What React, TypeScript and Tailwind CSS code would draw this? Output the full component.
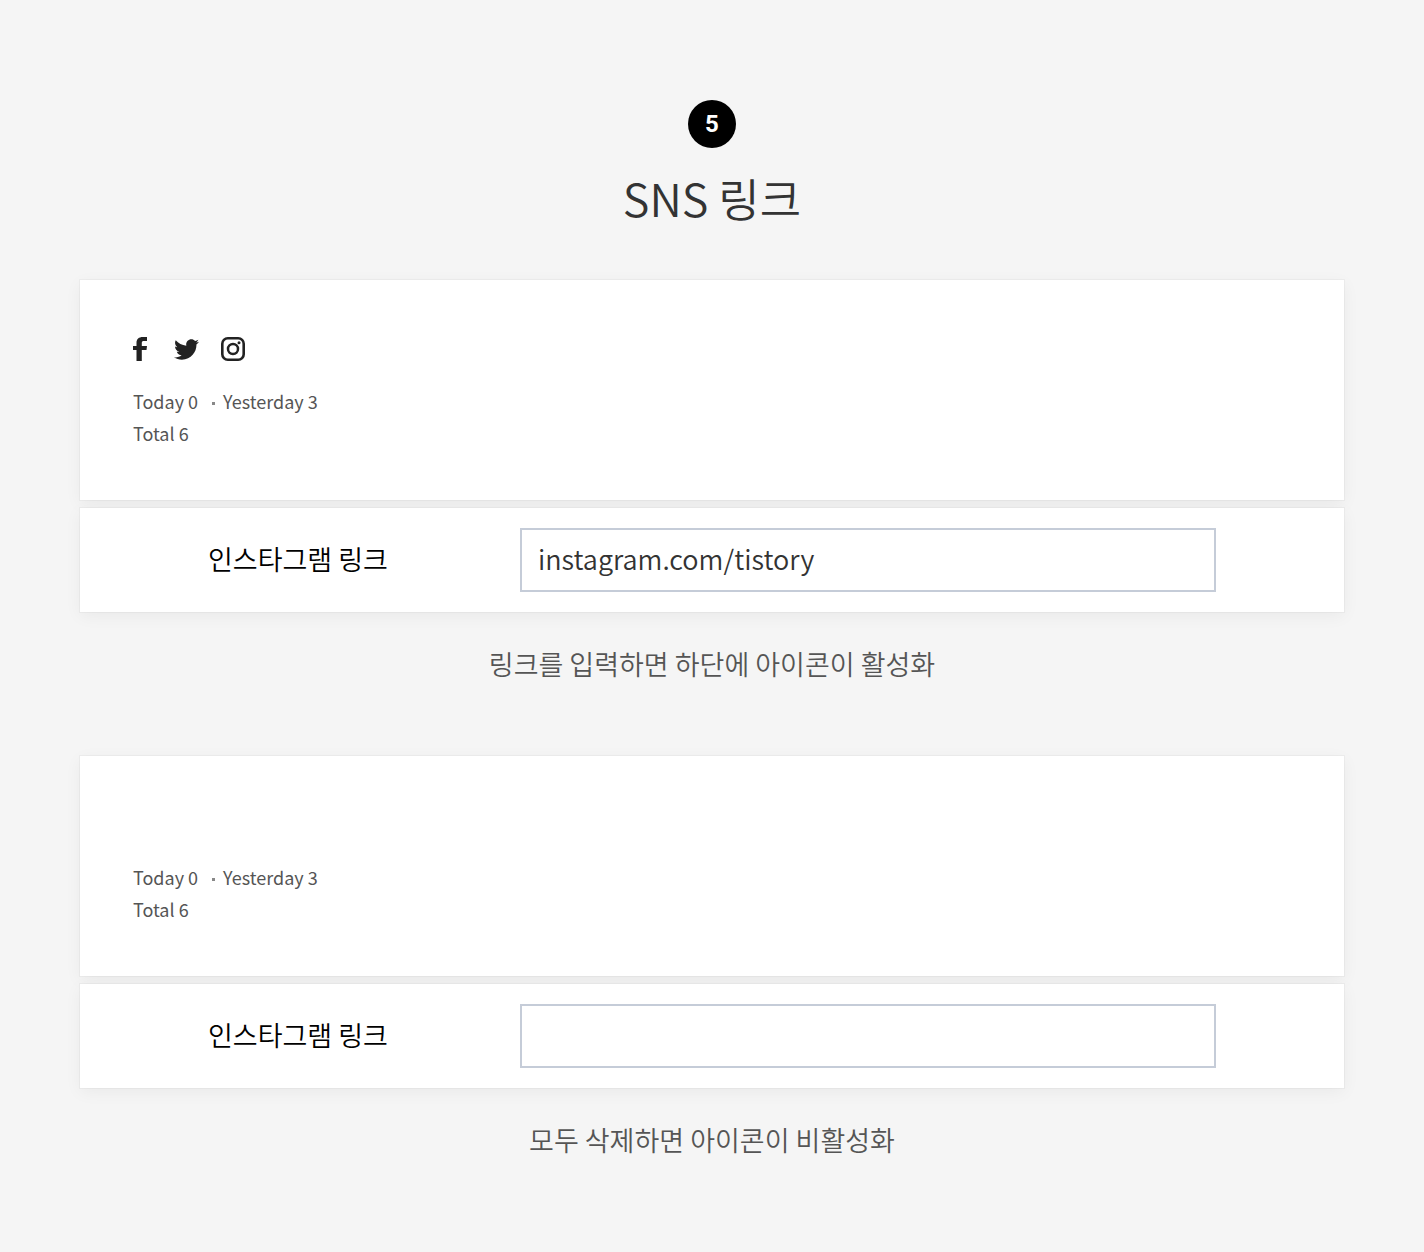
import { useState } from "react";
import { FaTwitter } from "react-icons/fa";

type ExampleProps = {
  id: string;
  initialLink: string;
  caption: string;
};

const shadow = "shadow-[0_0_0_1px_rgba(0,0,0,0.03),0_4px_16px_rgba(0,0,0,0.05)]";

function FacebookIcon() {
  return (
    <svg viewBox="0 0 14 24" className="h-6 w-[14px]" fill="currentColor" aria-hidden="true">
      <path d="M3.500 24V13H0V9h3.500V6C3.500 2 5.800 0 9.800 0H14v4h-3C9.400 4 8.800 4.600 8.800 6v3H14l-.5 4H8.800v11z" />
    </svg>
  );
}

function InstagramIcon() {
  return (
    <svg viewBox="0 0 24 24" className="size-6" fill="none" stroke="currentColor" aria-hidden="true">
      <rect x="1.300" y="1.300" width="21.400" height="21.400" rx="5.500" strokeWidth="2.600" />
      <circle cx="12" cy="12" r="5" strokeWidth="2.500" />
      <circle cx="18" cy="5.800" r="1.500" fill="currentColor" stroke="none" />
    </svg>
  );
}

function SnsLinks() {
  return (
    <>
      <a href="#facebook" aria-label="Facebook">
        <FacebookIcon />
      </a>
      <a href="#twitter" aria-label="Twitter" className="ml-[27px]">
        <FaTwitter className="size-[25px]" />
      </a>
      <a href="#instagram" aria-label="Instagram" className="ml-[22px]">
        <InstagramIcon />
      </a>
    </>
  );
}

function Example({ id, initialLink, caption }: ExampleProps) {
  const [link, setLink] = useState(initialLink);

  return (
    <section>
      <div className={`bg-white px-[53px] pt-[57px] pb-[51px] ${shadow}`}>
        <div className="flex h-6 items-center text-[#222]">{link && <SnsLinks />}</div>
        <div className="mt-6 text-[18px] leading-8 text-[#555]">
          <p className="flex items-center">
            <span>Today 0</span>
            <span className="mt-1 mr-2 ml-3.5 size-[3px] bg-[#888]" />
            <span>Yesterday 3</span>
          </p>
          <p>Total 6</p>
        </div>
      </div>

      <div className={`mt-2 flex items-center bg-white px-32 py-5 ${shadow}`}>
        <label htmlFor={id} className="w-[312px] shrink-0 pb-0.5 text-[27px] font-[350] text-black">
          인스타그램 링크
        </label>
        <input
          id={id}
          type="text"
          value={link}
          onChange={(e) => setLink(e.target.value)}
          className="h-16 min-w-0 flex-1 border-2 border-[#c5ccd8] bg-white px-4 pb-1 text-[27px] font-[350] text-[#333] outline-none"
        />
      </div>

      <p className="mt-8 text-center text-[27px] leading-10 font-[350] text-[#555]">{caption}</p>
    </section>
  );
}

export default function App() {
  return (
    <main className="min-h-screen bg-[#f5f5f5] px-20 pt-[100px] pb-20 font-['Noto_Sans_CJK_KR',sans-serif]">
      <header className="flex flex-col items-center">
        <span className="flex size-12 items-center justify-center rounded-full bg-black font-['Roboto',sans-serif] text-2xl font-bold text-white">
          5
        </span>
        <h1 className="mt-[18px] mb-[50px] text-[45px] leading-[64px] font-[350] text-[#333]">SNS 링크</h1>
      </header>

      <div className="flex flex-col gap-[72px]">
        <Example
          id="instagram-on"
          initialLink="instagram.com/tistory"
          caption="링크를 입력하면 하단에 아이콘이 활성화"
        />
        <Example id="instagram-off" initialLink="" caption="모두 삭제하면 아이콘이 비활성화" />
      </div>
    </main>
  );
}
